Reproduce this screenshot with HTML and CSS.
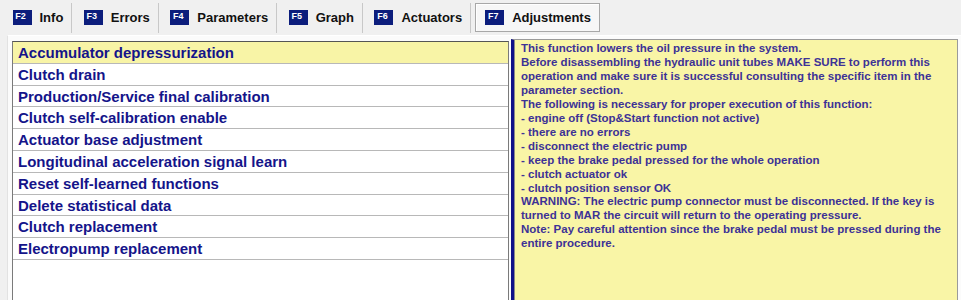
FILE: index.html
```html
<!DOCTYPE html>
<html lang="en">
  <head>
    <meta charset="UTF-8" />
    <title>Adjustments</title>
    <link rel="stylesheet" href="styles.css">
  </head>
  <body>
    <div class="tabs">
      <div class="tab"><span class="key">F2</span>Info</div>
      <div class="tab"><span class="key">F3</span>Errors</div>
      <div class="tab"><span class="key">F4</span>Parameters</div>
      <div class="tab"><span class="key">F5</span>Graph</div>
      <div class="tab"><span class="key">F6</span>Actuators</div>
      <div class="tab active"><span class="key">F7</span>Adjustments</div>
    </div>

    <div class="content">
      <ul class="list">
        <li class="selected">Accumulator depressurization</li>
        <li>Clutch drain</li>
        <li>Production/Service final calibration</li>
        <li>Clutch self-calibration enable</li>
        <li>Actuator base adjustment</li>
        <li>Longitudinal acceleration signal learn</li>
        <li>Reset self-learned functions</li>
        <li>Delete statistical data</li>
        <li>Clutch replacement</li>
        <li>Electropump replacement</li>
      </ul>

      <div class="info">
        This function lowers the oil pressure in the system.<br>
        Before disassembling the hydraulic unit tubes MAKE SURE to perform this
        operation and make sure it is successful consulting the specific item in the
        parameter section.<br>
        The following is necessary for proper execution of this function:<br>
        - engine off (Stop&amp;Start function not active)<br>
        - there are no errors<br>
        - disconnect the electric pump<br>
        - keep the brake pedal pressed for the whole operation<br>
        - clutch actuator ok<br>
        - clutch position sensor OK<br>
        WARNING: The electric pump connector must be disconnected. If the key is
        turned to MAR the circuit will return to the operating pressure.<br>
        Note: Pay careful attention since the brake pedal must be pressed during the
        entire procedure.
      </div>
    </div>
  </body>
</html>
```

FILE: styles.css
```css
body {
  font-family: "Liberation Sans", Arial, sans-serif;
  background-color: #f0f0f0;
  margin: 0;
  height: 300px;
  overflow: hidden;
}
.tabs {
  display: flex;
  height: 35px;
  align-items: center;
  padding-left: 1px;
}
.tab {
  display: flex;
  align-items: center;
  gap: 8px;
  height: 30px;
  padding: 0 8px 0 11.5px;
  border-right: 1px solid #c8c8c8;
  font-size: 13px;
  font-weight: bold;
  color: #111;
}
.tab.active {
  margin-left: 4px;
  padding: 0 8px 0 9px;
  height: 27px;
  border: 1px solid #a8a8a8;
  background-color: #f7f7f7;
  box-shadow: inset 1px 1px 0 #fff;
}
.key {
  display: inline-block;
  width: 19px;
  height: 15px;
  line-height: 13px;
  background-color: #0c1d7c;
  color: #fff;
  font-size: 9px;
  text-align: center;
  text-indent: -3px;
}
.content {
  display: flex;
  gap: 2px;
  height: 265px;
  margin-left: 7px;
  padding: 3px 3px 0 4px;
  background-color: #fbfbfb;
  border-left: 1px solid #e2e2e2;
  border-top: 1px solid #fff;
}
.list {
  width: 495px;
  margin: 2px 0 0 0;
  padding: 0;
  list-style: none;
  background-color: #fff;
  border: 1px solid #7a7a7a;
  border-top-color: #555;
}
.list li {
  height: 20.8px;
  line-height: 21px;
  padding-left: 5px;
  border-bottom: 1px solid #b8b8b8;
  font-size: 15px;
  font-weight: bold;
  color: #14148a;
  white-space: nowrap;
}
.list li.selected {
  background-color: #f8f4a6;
}
.info {
  flex: 1;
  padding: 2px 5px 0 7px;
  background-color: #f9f5a6;
  border: 1px solid #9a9a9a;
  border-left: 3px solid #101088;
  box-shadow: inset 1px 0 0 #8a8a8a;
  font-size: 11.5px;
  font-weight: bold;
  line-height: 13.95px;
  color: #3d3296;
}
```
